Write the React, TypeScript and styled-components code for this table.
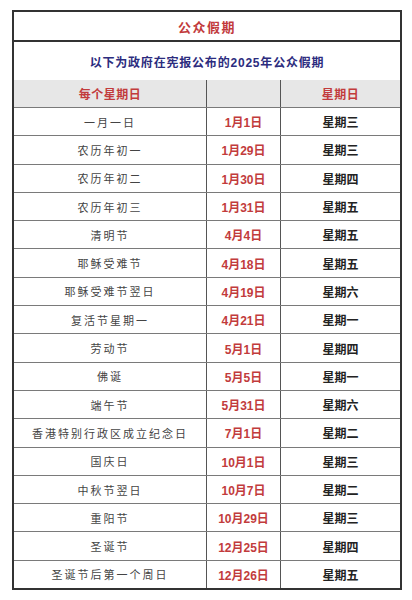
import React from 'react'
import styled, { createGlobalStyle } from 'styled-components'

const GlobalStyle = createGlobalStyle`
  html, body {
    margin: 0;
    padding: 0;
    background: #ffffff;
  }
  body {
    font-family: 'Liberation Sans', 'Noto Sans CJK SC', sans-serif;
  }
`

const Page = styled.div`
  padding: 10px 10px 10px 12px;
`

const Sheet = styled.div`
  width: 390px;
  box-sizing: border-box;
  border: 2px solid #333333;
  background: #ffffff;
`

const TitleRow = styled.div`
  height: 28px;
  display: flex;
  align-items: center;
  justify-content: center;
  border-bottom: 2px solid #333333;
  color: #c23b3c;
  font-size: 13px;
  font-weight: 700;
  letter-spacing: 1.5px;
`

const NoticeRow = styled.div`
  height: 38px;
  display: flex;
  align-items: center;
  justify-content: center;
  color: #2c2c7e;
  font-size: 12px;
  font-weight: 700;
  letter-spacing: 0.8px;
`

const Grid = styled.div<{ $head?: boolean }>`
  display: grid;
  grid-template-columns: 192px 1px 73px 1px 1fr;
  height: ${(p) => (p.$head ? '27px' : '28.3px')};
  box-sizing: border-box;
  border-top: ${(p) => (p.$head ? 'none' : '1px solid #7a7a7a')};
  background: ${(p) => (p.$head ? '#e7e7e7' : '#ffffff')};
`

const Divider = styled.div`
  background: #555555;
`

type Tone = 'name' | 'date' | 'day' | 'head'

const Cell = styled.div<{ $tone: Tone }>`
  display: flex;
  align-items: center;
  justify-content: center;
  white-space: nowrap;
  font-size: ${(p) => (p.$tone === 'name' ? '11px' : '12px')};
  font-weight: ${(p) => (p.$tone === 'name' ? 400 : 700)};
  letter-spacing: ${(p) => (p.$tone === 'name' ? '2px' : p.$tone === 'head' ? '0.5px' : '0')};
  color: ${(p) =>
    p.$tone === 'name' ? '#444444' : p.$tone === 'day' ? '#222222' : '#c23b3c'};
`

const holidays: [string, string, string][] = [
  ['一月一日', '1月1日', '星期三'],
  ['农历年初一', '1月29日', '星期三'],
  ['农历年初二', '1月30日', '星期四'],
  ['农历年初三', '1月31日', '星期五'],
  ['清明节', '4月4日', '星期五'],
  ['耶稣受难节', '4月18日', '星期五'],
  ['耶稣受难节翌日', '4月19日', '星期六'],
  ['复活节星期一', '4月21日', '星期一'],
  ['劳动节', '5月1日', '星期四'],
  ['佛诞', '5月5日', '星期一'],
  ['端午节', '5月31日', '星期六'],
  ['香港特别行政区成立纪念日', '7月1日', '星期二'],
  ['国庆日', '10月1日', '星期三'],
  ['中秋节翌日', '10月7日', '星期二'],
  ['重阳节', '10月29日', '星期三'],
  ['圣诞节', '12月25日', '星期四'],
  ['圣诞节后第一个周日', '12月26日', '星期五'],
]

const App: React.FC = () => {
  return (
    <>
      <GlobalStyle />
      <Page>
        <Sheet>
          <TitleRow>公众假期</TitleRow>
          <NoticeRow>以下为政府在宪报公布的2025年公众假期</NoticeRow>
          <Grid $head>
            <Cell $tone="head">每个星期日</Cell>
            <Divider />
            <Cell $tone="head" />
            <Divider />
            <Cell $tone="head">星期日</Cell>
          </Grid>
          {holidays.map(([name, date, day]) => (
            <Grid key={name}>
              <Cell $tone="name">{name}</Cell>
              <Divider />
              <Cell $tone="date">{date}</Cell>
              <Divider />
              <Cell $tone="day">{day}</Cell>
            </Grid>
          ))}
        </Sheet>
      </Page>
    </>
  )
}

export default App
